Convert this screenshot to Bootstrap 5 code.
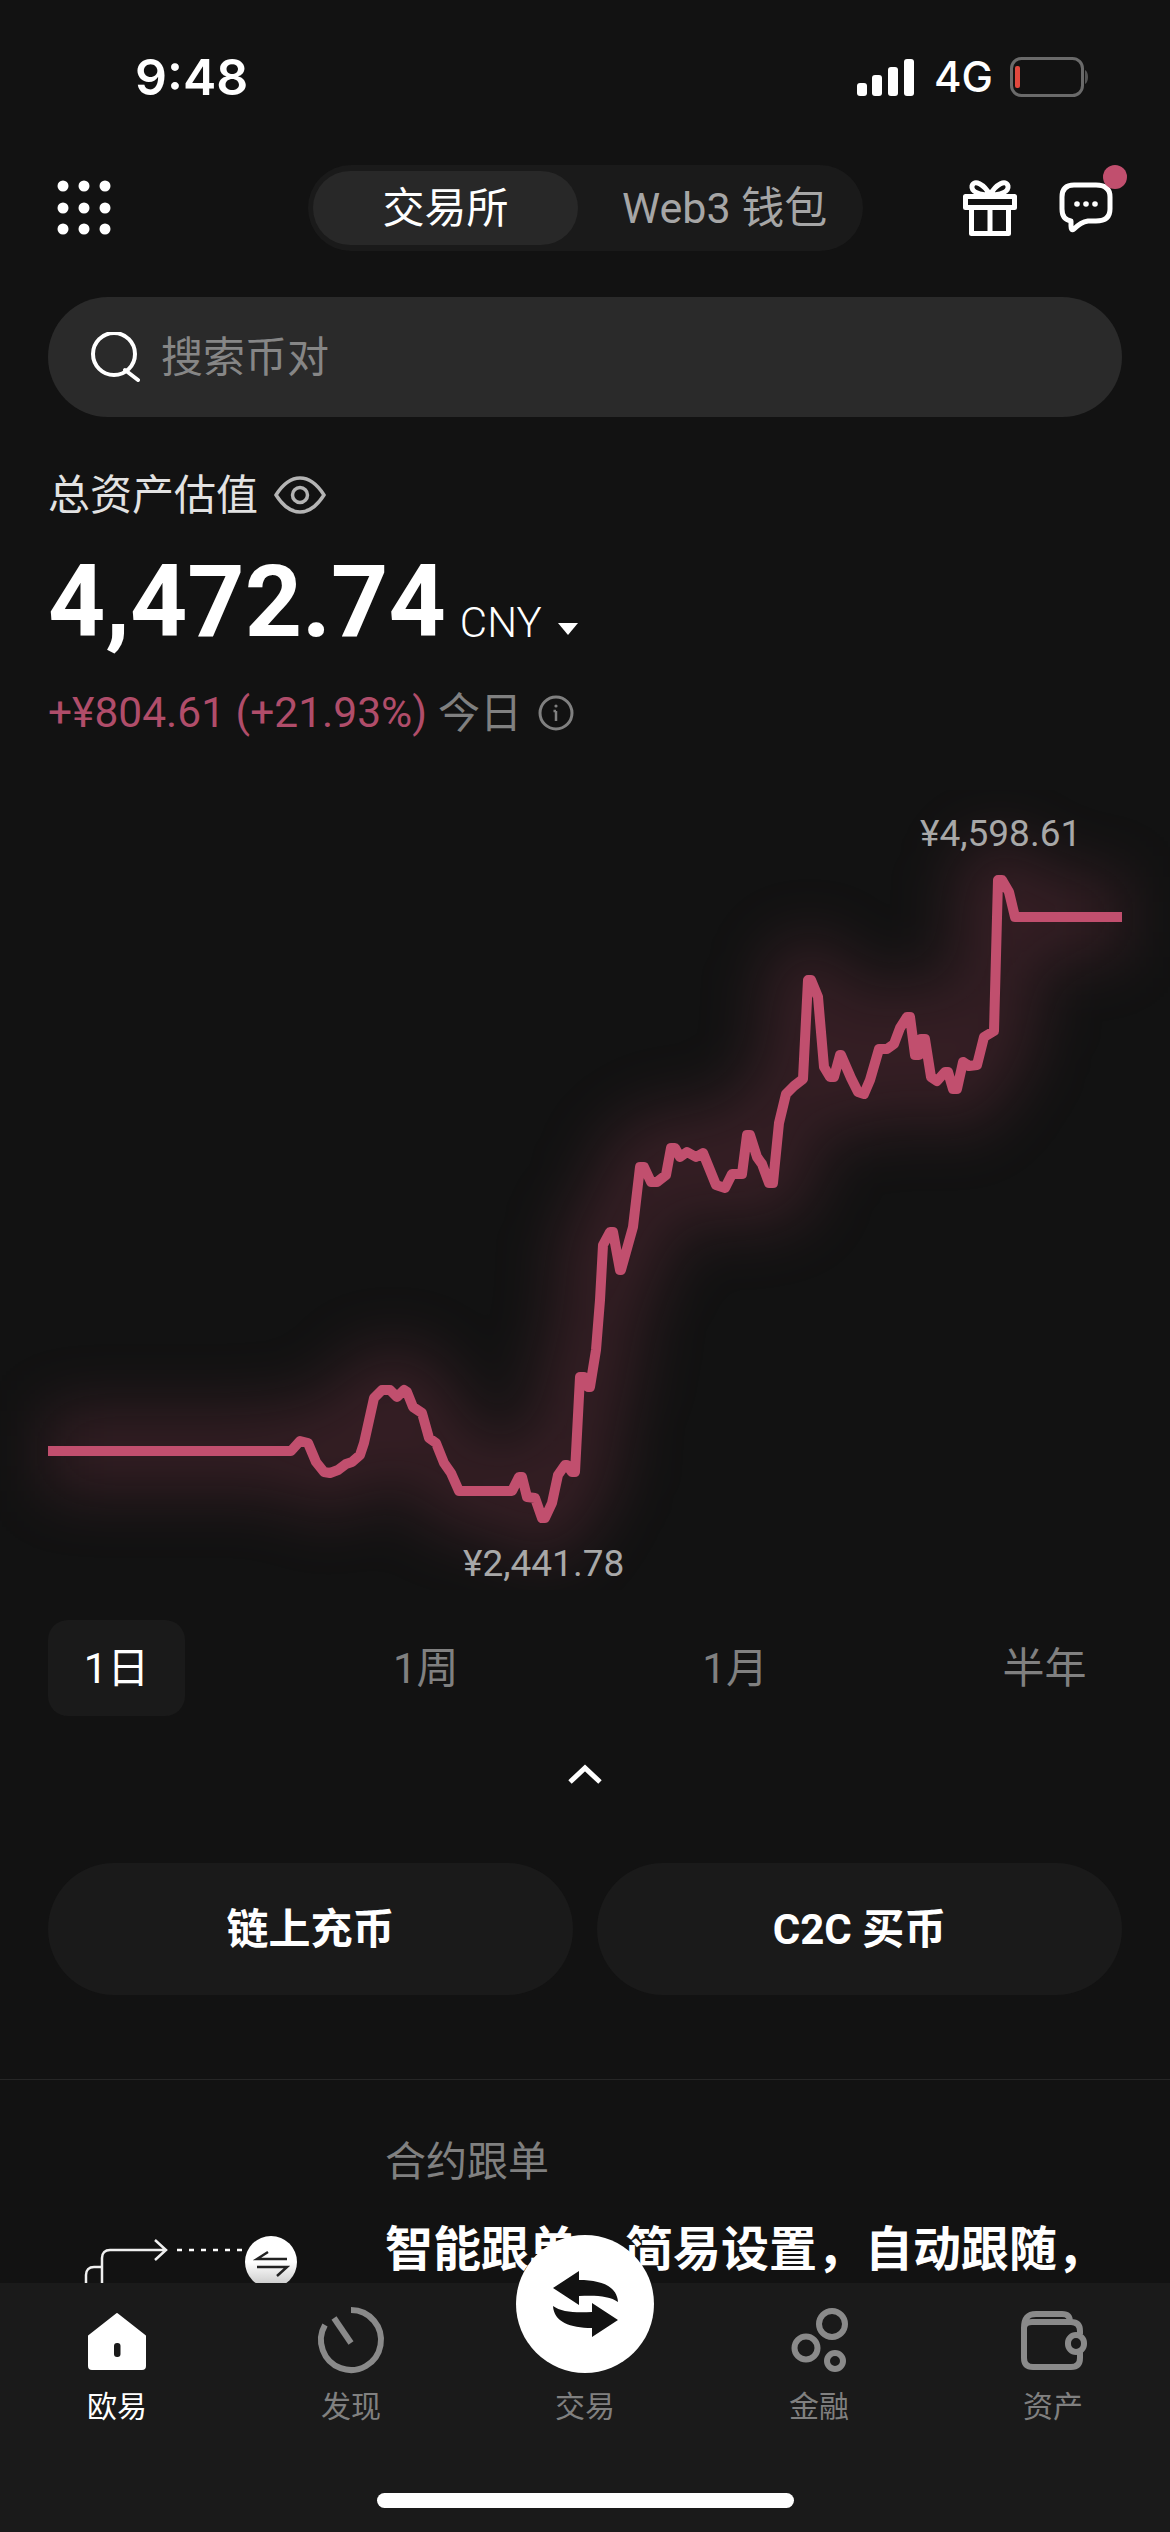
<!DOCTYPE html>
<html lang="zh">
  <head>
    <meta charset="utf-8" />
    <title>欧易</title>
    <link
      href="https://cdn.jsdelivr.net/npm/bootstrap@5.3.3/dist/css/bootstrap.min.css"
      rel="stylesheet"
    />
    <script src="https://cdn.jsdelivr.net/npm/bootstrap@5.3.3/dist/js/bootstrap.bundle.min.js"></script>
    <style>
      html, body { height: 2532px; }
      body {
        background: #121212;
        color: #fff;
        font-family: Roboto, "Noto Sans CJK SC", sans-serif;
        font-size: 42px;
        overflow: hidden;
        position: relative;
      }
      svg { display: block; }
      .status-row { height: 154px; margin-bottom: 11px; padding: 0 82px 0 135px; }
      .status-time { font-family: Inter, sans-serif; font-size: 50px; font-weight: 600; line-height: 1; }
      .status-net { font-family: Inter, sans-serif; font-size: 42px; font-weight: 500; line-height: 1; margin: 0 17px 0 20px; }
      .top-row { height: 86px; padding: 0 56px 0 54px; }
      .seg-box { background: #1a1a1a; border-radius: 43px; height: 86px; left: 308px; padding: 6px 5px; position: absolute; top: 165px; width: 555px; }
      .seg-on { background: #282828; border-radius: 37px; height: 74px; width: 265px; }
      .seg-off { color: #a6a6a6; font-size: 43px; margin-left: 44px; white-space: nowrap; }
      .search-box { background: #2a2a2a; border-radius: 60px; color: #868686; gap: 21px; height: 120px; margin: 46px 48px 0; padding-left: 42px; }
      .asset-label { color: #e2e2e2; gap: 16px; height: 56px; margin: 50px 48px 0; }
      .asset-num { gap: 14px; height: 96px; margin: 33px 48px 0; }
      .asset-big { font-size: 100px; font-weight: 700; line-height: 1; }
      .asset-unit { font-size: 42px; font-weight: 300; line-height: 1; margin-bottom: 8px; }
      .asset-tri { border-left: 10px solid transparent; border-right: 10px solid transparent; border-top: 12px solid #fff; margin: 0 0 17px 2px; }
      .asset-day { height: 56px; margin: 33px 48px 0; }
      .txt-up { color: #b04d6a; font-size: 42.5px; }
      .txt-dim { color: #808080; margin-left: 11px; }
      .chart-svg { margin-top: 49px; }
      .chart-svg text { fill: #a8a8a8; font-family: Roboto, sans-serif; font-size: 37px; }
      .range-row { margin: 30px 0 0 48px; }
      .range-item { border-radius: 20px; color: #808080; flex: 0 0 137px; height: 96px; margin-right: 172.3px; }
      .range-on { background: #1a1a1a; color: #fff; }
      .fold-row { height: 147px; padding-bottom: 32px; }
      .act-row { gap: 24px; padding: 0 48px; }
      .act-btn { background: #1a1a1a; border: 0; border-radius: 66px; color: #fff; flex: 1; font-size: 42px; font-weight: 700; height: 132px; }
      .line-sep { border-top: 1px solid #262626; margin-top: 84px; }
      .promo-row { padding: 50px 0 0 48px; }
      .promo-art { flex: 0 0 337px; }
      .promo-tag { color: #808080; font-size: 41px; line-height: 64px; }
      .promo-head { font-size: 48px; font-weight: 700; line-height: 64px; margin-top: 24px; white-space: nowrap; }
      .tab-bar { background: #1a1a1a; bottom: 0; height: 249px; left: 0; position: absolute; width: 1170px; }
      .tab-item { align-items: center; color: #808080; display: flex; flex-direction: column; font-size: 30px; gap: 9px; line-height: 40px; width: 234px; }
      .tab-on { color: #fff; }
      .tab-svg { height: 70px; overflow: visible; width: 70px; }
      .tab-fab { background: #fff; border-radius: 50%; height: 138px; left: 516px; position: absolute; top: 2235px; width: 138px; }
      .home-line { background: #fff; border-radius: 8px; bottom: 24px; height: 15px; left: 377px; position: absolute; width: 417px; }
      .red-dot { background: #c14f6e; border-radius: 50%; height: 24px; left: 1103px; position: absolute; top: 165px; width: 24px; }
    </style>
  </head>
  <body>
    <div class="status-row d-flex align-items-center justify-content-between">
      <span class="status-time">9:48</span>
      <div class="d-flex align-items-center">
        <svg width="57" height="37" viewBox="0 0 57 37" fill="#fff">
          <rect x="0" y="24" width="10" height="13" rx="3" />
          <rect x="15" y="16" width="10" height="21" rx="3" />
          <rect x="31" y="8" width="10" height="29" rx="3" />
          <rect x="47" y="0" width="10" height="37" rx="3" />
        </svg>
        <span class="status-net">4G</span>
        <svg width="78" height="40" viewBox="0 0 78 40">
          <rect x="1.5" y="1.5" width="71" height="37" rx="10" fill="none" stroke="#6a6a6a" stroke-width="3" />
          <rect x="5" y="9" width="5" height="22" rx="2" fill="#e0483e" />
          <path d="M75 13c4 2 4 12 0 14z" fill="#555" />
        </svg>
      </div>
    </div>

    <div class="top-row d-flex align-items-center justify-content-between">
      <svg width="60" height="60" viewBox="54 177 60 60" fill="#fff">
        <circle cx="63" cy="185" r="5.5" /><circle cx="84" cy="185" r="5.5" /><circle cx="105" cy="185" r="5.5" />
        <circle cx="63" cy="207" r="5.5" /><circle cx="84" cy="207" r="5.5" /><circle cx="105" cy="207" r="5.5" />
        <circle cx="63" cy="228" r="5.5" /><circle cx="84" cy="228" r="5.5" /><circle cx="105" cy="228" r="5.5" />
      </svg>
      <div class="d-flex align-items-center" style="gap:38px">
        <svg width="60" height="62" viewBox="960 176 60 62" fill="none" stroke="#fff" stroke-width="5" stroke-linejoin="round">
          <path d="M990 194c-6-11-16-16-18-9-1 6 8 9 18 9zM990 194c6-11 16-16 18-9 1 6-8 9-18 9z" />
          <path d="M965.5 195.500h49v11h-49zM971.500 206.500v26h37v-26M990 206.500v26" />
        </svg>
        <svg width="56" height="54" viewBox="1058 181 56 54">
          <path d="M1074 185h22c9 0 14 4 14 12v12c0 8-5 12-14 12h-8c-6 1-10 4-14 8-2 2-3 0-3-3v-5c-6-1-9-5-9-12v-12c0-8 4-12 12-12z" fill="none" stroke="#fff" stroke-width="5" stroke-linejoin="round" />
          <circle cx="1077" cy="204" r="2.8" fill="#fff" /><circle cx="1086" cy="204" r="2.8" fill="#fff" /><circle cx="1095" cy="204" r="2.8" fill="#fff" />
        </svg>
      </div>
    </div>
    <div class="seg-box d-flex align-items-center">
      <div class="seg-on d-flex align-items-center justify-content-center">交易所</div>
      <div class="seg-off">Web3 钱包</div>
    </div>
    <span class="red-dot"></span>

    <div class="search-box d-flex align-items-center">
      <svg width="50" height="50" viewBox="89 332 50 50" fill="none" stroke="#fff" stroke-width="4">
        <circle cx="113" cy="354" r="21" /><path d="M124 370l13 10" stroke-linecap="round" />
      </svg>
      <span>搜索币对</span>
    </div>

    <div class="asset-label d-flex align-items-center">
      <span>总资产估值</span>
      <svg width="52" height="38" viewBox="274 476 52 38" fill="none" stroke="#b4b4b4" stroke-width="3.5">
        <path d="M276 495c7-11 15-17 24-17s17 6 24 17c-7 11-15 17-24 17s-17-6-24-17z" /><circle cx="300" cy="495" r="7.5" />
      </svg>
    </div>
    <div class="asset-num d-flex align-items-end">
      <span class="asset-big">4,472.74</span>
      <span class="asset-unit">CNY</span>
      <span class="asset-tri"></span>
    </div>
    <div class="asset-day d-flex align-items-center">
      <span class="txt-up">+¥804.61 (+21.93%)</span>
      <span class="txt-dim">今日</span>
      <svg class="ms-3" width="36" height="36" viewBox="0 0 36 36" fill="none" stroke="#808080" stroke-width="3">
        <circle cx="18" cy="18" r="16" /><path d="M18 16v10M15.5 16h2.5" stroke-width="2.5" /><circle cx="18" cy="11" r="1.6" fill="#808080" stroke="none" />
      </svg>
    </div>

    <svg class="chart-svg" id="chartSvg" width="1170" height="800" viewBox="0 790 1170 800" fill="none">
      <defs>
        <filter id="glow" filterUnits="userSpaceOnUse" x="0" y="790" width="1170" height="800" color-interpolation-filters="sRGB">
          <feGaussianBlur stdDeviation="32" />
        </filter>
      </defs>
      <polyline id="chartGlow" filter="url(#glow)" stroke="#c14f6e" stroke-opacity=".2" stroke-width="80" stroke-linejoin="round" />
      <polyline id="chartLine" stroke="#c14f6e" stroke-width="10" stroke-linejoin="round" />
      <text x="920" y="846">¥4,598.61</text>
      <text x="463" y="1576">¥2,441.78</text>
    </svg>

    <div class="range-row d-flex">
      <div class="range-item range-on d-flex align-items-center justify-content-center">1日</div>
      <div class="range-item d-flex align-items-center justify-content-center">1周</div>
      <div class="range-item d-flex align-items-center justify-content-center">1月</div>
      <div class="range-item d-flex align-items-center justify-content-center">半年</div>
    </div>
    <div class="fold-row d-flex align-items-center justify-content-center">
      <svg width="34" height="20" viewBox="0 0 34 20" fill="none" stroke="#fff" stroke-width="5"><path d="M2 18L17 4l15 14" /></svg>
    </div>
    <div class="act-row d-flex">
      <button class="act-btn btn" type="button">链上充币</button>
      <button class="act-btn btn" type="button">C2C 买币</button>
    </div>
    <div class="line-sep"></div>

    <div class="promo-row d-flex">
      <div class="promo-art">
        <svg width="337" height="160" viewBox="48 2130 337 160" fill="none" stroke="#f0f0f0" stroke-width="2.5">
          <defs>
            <linearGradient id="coinFill" x1="0" y1="0" x2="0" y2="1">
              <stop offset=".5" stop-color="#fff" /><stop offset="1" stop-color="#c4c4c4" />
            </linearGradient>
          </defs>
          <path d="M102 2290v-32c0-5 3-8 8-8h55M155 2240l11 10-11 10M86 2290v-15c0-5 3-8 8-8h8" />
          <path d="M177 2250h66" stroke="#fff" stroke-dasharray="5 7" />
          <circle cx="271" cy="2262" r="26" fill="url(#coinFill)" stroke="none" />
          <path d="M287 2259h-30l11-7M257 2267h30l-10 9" stroke="#222" stroke-width="2.500" />
        </svg>
      </div>
      <div>
        <div class="promo-tag">合约跟单</div>
        <div class="promo-head">智能跟单，简易设置，自动跟随，</div>
      </div>
    </div>

    <div class="tab-bar">
      <div class="d-flex" style="padding-top:25px">
        <div class="tab-item tab-on">
          <svg class="tab-svg" viewBox="82 2308 70 70">
            <path d="M117 2314l28 22v30c0 2-1 3-3 3H92c-2 0-3-1-3-3v-30z" fill="#fff" stroke="#fff" stroke-linejoin="round" stroke-width="2" />
            <rect x="114" y="2343" width="6.500" height="14" rx="3" fill="#1a1a1a" />
          </svg>
          <span>欧易</span>
        </div>
        <div class="tab-item">
          <svg class="tab-svg" viewBox="316 2308 70 70" fill="none" stroke="#8a8a8a" stroke-width="6">
            <path d="M351 2310A30 30 0 1 1 325 2325" /><path d="M334 2318l17 25" />
          </svg>
          <span>发现</span>
        </div>
        <div class="tab-item">
          <div class="tab-svg"></div>
          <span>交易</span>
        </div>
        <div class="tab-item">
          <svg class="tab-svg" viewBox="784 2308 70 70" fill="none" stroke="#8a8a8a" stroke-width="6">
            <circle cx="832" cy="2324" r="13" /><circle cx="806" cy="2348" r="11.500" /><circle cx="835" cy="2361" r="8" />
          </svg>
          <span>金融</span>
        </div>
        <div class="tab-item">
          <svg class="tab-svg" viewBox="1018 2308 70 70" fill="none" stroke="#8a8a8a" stroke-width="6">
            <path d="M1024 2328c0-10 4-14 12-14h26c6 0 8 3 8 8M1024 2328v30c0 6 3 9 9 9h38c6 0 9-3 9-9v-6M1024 2328c0-4 3-6 8-6h39c6 0 9 3 9 9v3" />
            <rect x="1068" y="2335" width="16" height="17" rx="8" />
          </svg>
          <span>资产</span>
        </div>
      </div>
      <div class="home-line"></div>
    </div>
    <div class="tab-fab">
      <svg width="138" height="138" viewBox="516 2235 138 138" fill="#121212">
        <path d="M553 2288l26-17v9c22 0 38 6 39 22-8-6-22-7-39-6v9z" />
        <path d="M553 2288l26-17v9c22 0 38 6 39 22-8-6-22-7-39-6v9z" transform="rotate(180 585.5 2304)" />
      </svg>
    </div>

    <script>
      // chart points read off the reference, in page pixels
      const chartPoints = [
        [48,1451],[291,1451],[300,1441],[308,1443],[316,1462],[324,1472],[330,1473],[338,1470],[346,1464],[352,1462],[360,1455],[364,1443],
        [374,1398],[382,1390],[390,1390],[397,1397],[404,1390],[407,1392],[413,1407],[422,1413],[429,1438],[436,1443],[444,1463],[451,1473],
        [459,1491],[512,1491],[519,1477],[522,1477],[527,1497],[535,1498],[542,1518],[545,1518],[552,1503],[558,1475],[565,1465],[567,1465],
        [572,1472],[575,1472],[580,1377],[584,1377],[588,1387],[590,1387],[596,1350],[600,1300],[603,1245],[610,1232],[613,1232],[620,1270],
        [621,1270],[633,1227],[640,1167],[644,1167],[651,1182],[657,1182],[666,1175],[671,1148],[675,1148],[680,1157],[687,1152],[696,1157],
        [703,1153],[716,1185],[725,1188],[732,1174],[742,1174],[747,1135],[750,1135],[757,1157],[762,1164],[769,1183],[773,1183],[779,1123],
        [786,1094],[794,1086],[803,1079],[808,980],[811,980],[818,997],[824,1067],[830,1077],[834,1077],[840,1055],[841,1055],[851,1078],
        [858,1092],[864,1094],[870,1080],[879,1049],[887,1049],[894,1044],[900,1028],[907,1017],[910,1017],[915,1055],[919,1055],[921,1039],
        [925,1039],[931,1077],[937,1081],[945,1072],[948,1072],[953,1089],[957,1089],[963,1062],[969,1066],[977,1065],[984,1037],[994,1031],
        [998,880],[1002,880],[1009,892],[1015,917],[1122,917]
      ];
      const pointText = chartPoints.map(function (p) { return p.join(','); }).join(' ');
      document.querySelector('#chartLine').setAttribute('points', pointText);
      document.querySelector('#chartGlow').setAttribute('points', pointText);
    </script>
  </body>
</html>
